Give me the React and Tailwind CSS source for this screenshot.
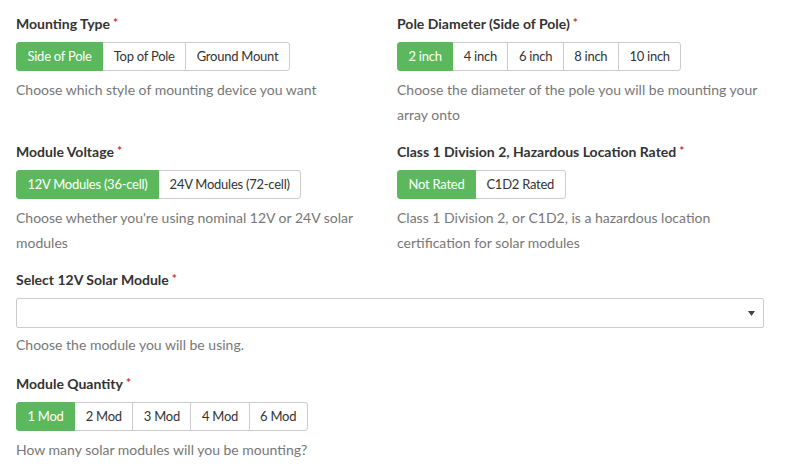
import React from "react";

const font = { fontFamily: "Lato, 'Open Sans', sans-serif" };

function Label({ children }) {
  return (
    <div className="text-[14px] leading-[20px] font-bold text-[#333333] mb-2">
      {children}
      <span className="text-[#c9302c] text-[12px] ml-[3px] align-top relative top-[-1px]">*</span>
    </div>
  );
}

function Help({ children }) {
  return <div className="mt-[6px] text-[14px] leading-[25px] text-[#777777]">{children}</div>;
}

function Group({ options, active = 0 }) {
  return (
    <div className="inline-flex">
      {options.map((o, i) => {
        const first = i === 0;
        const last = i === options.length - 1;
        const on = i === active;
        return (
          <button
            key={o}
            className={
              "h-[29px] px-[10.5px] flex items-center text-[13px] tracking-[-0.25px] border " +
              (first ? "rounded-l-[3px] " : "-ml-px ") +
              (last ? "rounded-r-[3px] " : "") +
              (on
                ? "bg-[#5cb85c] border-[#5cb85c] text-white relative z-10"
                : "bg-white border-[#cccccc] text-[#333333]")
            }
          >
            {o}
          </button>
        );
      })}
    </div>
  );
}

export default function App() {
  return (
    <div className="bg-white min-h-[476px] pl-4 pr-[23px] pt-[14px]" style={font}>
      <div className="grid grid-cols-2 gap-x-[14px]">
        <div>
          <Label>Mounting Type</Label>
          <Group options={["Side of Pole", "Top of Pole", "Ground Mount"]} />
          <Help>Choose which style of mounting device you want</Help>
        </div>
        <div>
          <Label>Pole Diameter (Side of Pole)</Label>
          <Group options={["2 inch", "4 inch", "6 inch", "8 inch", "10 inch"]} />
          <Help>Choose the diameter of the pole you will be mounting your array onto</Help>
        </div>
        <div className="mt-[15px]">
          <Label>Module Voltage</Label>
          <Group options={["12V Modules (36-cell)", "24V Modules (72-cell)"]} />
          <Help>Choose whether you're using nominal 12V or 24V solar modules</Help>
        </div>
        <div className="mt-[15px]">
          <Label>Class 1 Division 2, Hazardous Location Rated</Label>
          <Group options={["Not Rated", "C1D2 Rated"]} />
          <Help>Class 1 Division 2, or C1D2, is a hazardous location certification for solar modules</Help>
        </div>
      </div>
      <div className="mt-[15px]">
        <Label>Select 12V Solar Module</Label>
        <div className="h-[30px] border border-[#cccccc] rounded-[2px] flex items-center justify-end pr-[8px]">
          <svg width="7" height="5" viewBox="0 0 7 5">
            <path d="M0 0 L7 0 L3.5 5 Z" fill="#444" />
          </svg>
        </div>
        <div className="mt-[4px] text-[14px] leading-[25px] text-[#777777]">Choose the module you will be using.</div>
      </div>
      <div className="mt-[17px]">
        <Label>Module Quantity</Label>
        <Group options={["1 Mod", "2 Mod", "3 Mod", "4 Mod", "6 Mod"]} />
        <Help>How many solar modules will you be mounting?</Help>
      </div>
    </div>
  );
}
